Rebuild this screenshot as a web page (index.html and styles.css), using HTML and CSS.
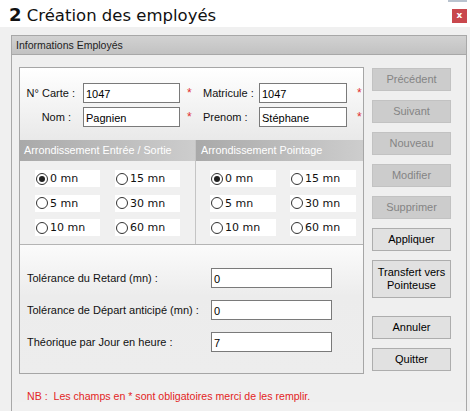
FILE: index.html
```html
<!DOCTYPE html>
<html lang="fr">
<head>
<meta charset="utf-8">
<title>Création des employés</title>
<link rel="stylesheet" href="styles.css">
</head>
<body>
<div class="titlebar">
  <h1 class="title"><b>2</b> Création des employés</h1>
  <div class="winctl"><span class="topline"></span><span class="close">x</span></div>
</div>
<div class="main">
  <div class="group">
    <div class="group-head">Informations Employés</div>
    <div class="group-body">
      <div class="content">
        <div class="panel">
          <div class="ids">
            <div class="idrow">
              <span class="lab1 carte">N° Carte :</span>
              <span class="field f1">1047</span>
              <span class="star s1">*</span>
              <span class="lab2">Matricule :</span>
              <span class="field f2">1047</span>
              <span class="star s2">*</span>
            </div>
            <div class="idrow">
              <span class="lab1 nom">Nom :</span>
              <span class="field f1">Pagnien</span>
              <span class="star s1">*</span>
              <span class="lab2">Prenom :</span>
              <span class="field f2">Stéphane</span>
              <span class="star s2">*</span>
            </div>
          </div>
          <div class="rounding">
            <div class="rcol rleft">
              <div class="rhead">Arrondissement Entrée / Sortie</div>
              <div class="rgrid">
                <span class="opt"><span class="radio on"></span>0 mn</span>
                <span class="opt"><span class="radio"></span>15 mn</span>
                <span class="opt"><span class="radio"></span>5 mn</span>
                <span class="opt"><span class="radio"></span>30 mn</span>
                <span class="opt"><span class="radio"></span>10 mn</span>
                <span class="opt"><span class="radio"></span>60 mn</span>
              </div>
            </div>
            <div class="rcol rright">
              <div class="rhead">Arrondissement Pointage</div>
              <div class="rgrid">
                <span class="opt"><span class="radio on"></span>0 mn</span>
                <span class="opt"><span class="radio"></span>15 mn</span>
                <span class="opt"><span class="radio"></span>5 mn</span>
                <span class="opt"><span class="radio"></span>30 mn</span>
                <span class="opt"><span class="radio"></span>10 mn</span>
                <span class="opt"><span class="radio"></span>60 mn</span>
              </div>
            </div>
          </div>
          <div class="tolerances">
            <div class="trow"><span class="tlab">Tolérance du Retard (mn) :</span><span class="field f3">0</span></div>
            <div class="trow"><span class="tlab">Tolérance de Départ anticipé (mn) :</span><span class="field f3">0</span></div>
            <div class="trow"><span class="tlab">Théorique par Jour en heure :</span><span class="field f3">7</span></div>
          </div>
        </div>
        <div class="buttons">
          <span class="btn disabled">Précédent</span>
          <span class="btn disabled">Suivant</span>
          <span class="btn disabled">Nouveau</span>
          <span class="btn disabled">Modifier</span>
          <span class="btn disabled">Supprimer</span>
          <span class="btn">Appliquer</span>
          <span class="btn tall">Transfert vers<br>Pointeuse</span>
          <span class="btn after-gap">Annuler</span>
          <span class="btn">Quitter</span>
        </div>
      </div>
      <p class="nb">NB :&nbsp; Les champs en * sont obligatoires merci de les remplir.</p>
    </div>
  </div>
</div>
</body>
</html>
```

FILE: styles.css
```css
* { box-sizing: border-box; }
html, body {
  margin: 0;
  padding: 0;
  width: 470px;
  height: 411px;
  overflow: hidden;
  background: #f0f0f0;
  font-family: "Liberation Sans", Arial, sans-serif;
  font-size: 11px;
  color: #1a1a1a;
}
.titlebar {
  height: 27px;
  background: #ffffff;
  display: flex;
  justify-content: space-between;
  align-items: flex-start;
}
.title {
  margin: 0;
  padding: 5px 0 0 9px;
  font-family: "DejaVu Sans", Verdana, sans-serif;
  font-weight: normal;
  font-size: 16.5px;
  line-height: 20px;
  color: #111;
}
.title b { font-size: 18px; font-weight: bold; }
.winctl {
  width: 20px;
  margin-right: 3px;
  display: flex;
  flex-direction: column;
  align-items: flex-end;
}
.topline {
  display: block;
  width: 19px;
  height: 2px;
  background: #b9c3cf;
}
.close {
  display: block;
  margin-top: 7px;
  width: 15px;
  height: 14px;
  background: #c9474d;
  color: #fff;
  font-family: "DejaVu Sans", sans-serif;
  font-weight: bold;
  font-size: 9px;
  line-height: 13px;
  text-align: center;
}
.main {
  padding: 8px 3px 0 11px;
}
.group {
  border: 1px solid #a8a8a8;
  border-bottom: 0;
  height: 376px;
  background: #f0f0f0;
}
.group-head {
  height: 19px;
  background: linear-gradient(to bottom, #d2d2d2, #c2c2c2);
  border-bottom: 1px solid #a8a8a8;
  padding: 3px 0 0 4px;
  font-size: 10.5px;
  color: #1e1e1e;
}
.group-body {
  padding: 12px 0 0 7px;
  background: #efefef;
}
.content {
  display: flex;
  align-items: flex-start;
}
.panel {
  width: 345px;
  border: 1px solid #a6a6a6;
  background: #f0f0f0;
}
.ids {
  height: 72px;
  padding-top: 15px;
  background: linear-gradient(to bottom, #ffffff, #e9e9e9);
  display: flex;
  flex-direction: column;
  gap: 4px;
}
.idrow {
  display: flex;
  align-items: center;
  height: 20px;
}
.lab1 {
  width: 63px;
  text-align: right;
  color: #111;
}
.lab1.carte { padding-right: 8px; }
.lab1.nom { padding-right: 12px; }
.field {
  display: block;
  height: 20px;
  border: 1px solid #7a7a7a;
  background: #fff;
  padding: 3px 0 0 2px;
  font-size: 11px;
  color: #000;
  line-height: 14px;
}
.f1 { width: 97px; }
.f2 { width: 88px; }
.f3 { width: 121px; }
.star {
  color: #e03030;
  font-size: 12px;
  width: 6px;
  align-self: flex-start;
  padding-top: 3px;
}
.s1 { margin-left: 7px; }
.lab2 {
  margin-left: 10px;
  width: 56px;
  color: #111;
}
.s2 { margin-left: 10px; }
.rounding {
  display: flex;
  border-bottom: 1px solid #b4b4b4;
}
.rcol { display: flex; flex-direction: column; }
.rleft { width: 176px; border-right: 1px solid #c4c4c4; }
.rright { flex: 1; }
.rhead {
  height: 21px;
  padding: 4px 0 0 4px;
  background: linear-gradient(to right, #a9a9a9, #cdcdcd);
  color: #fff;
  font-size: 10.8px;
  white-space: nowrap;
}
.rright .rhead { padding-left: 5px; }
.rgrid {
  height: 83px;
  padding: 9px 0 0 15px;
  display: grid;
  grid-template-columns: 65px 65px;
  grid-auto-rows: 17px;
  column-gap: 15px;
  row-gap: 7.5px;
  align-content: start;
}
.rright .rgrid {
  padding-left: 14px;
  grid-template-columns: 66px 66px;
  column-gap: 14px;
}
.opt {
  display: flex;
  align-items: center;
  background: #fff;
  font-family: "DejaVu Sans", Verdana, sans-serif;
  font-size: 11px;
  color: #111;
  gap: 2px;
}
.radio {
  width: 12px;
  height: 12px;
  border: 1px solid #333;
  border-radius: 50%;
  background: #fff;
  display: flex;
  align-items: center;
  justify-content: center;
  margin-left: 1px;
}
.radio.on::after {
  content: "";
  width: 6px;
  height: 6px;
  border-radius: 50%;
  background: #222;
}
.tolerances {
  height: 128px;
  padding-top: 23px;
  background: linear-gradient(to bottom, #fbfbfb, #ececec 40%, #ededed);
  display: flex;
  flex-direction: column;
  gap: 12px;
}
.trow {
  display: flex;
  align-items: center;
  height: 20px;
}
.tlab {
  width: 191px;
  padding-left: 7px;
  color: #111;
}
.buttons {
  margin-left: 8px;
  margin-top: 1px;
  display: flex;
  flex-direction: column;
  gap: 9px;
}
.btn {
  display: flex;
  align-items: center;
  justify-content: center;
  text-align: center;
  width: 79px;
  height: 23px;
  border: 1px solid #adadad;
  background: #e1e1e1;
  color: #000;
  font-size: 11px;
  line-height: 13px;
}
.btn.disabled {
  background: #cccccc;
  border-color: #c2c2c2;
  color: #848484;
}
.btn.tall { height: 38px; }
.btn.after-gap { margin-top: 9px; }
.nb {
  margin: 16px 0 0 8px;
  color: #e32424;
  font-size: 10.6px;
}
```
